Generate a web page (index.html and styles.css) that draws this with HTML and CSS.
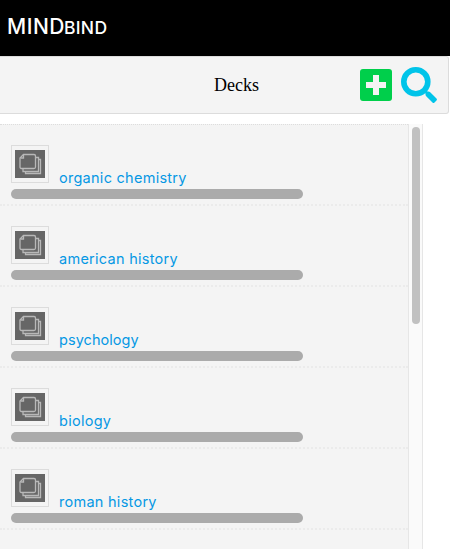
FILE: index.html
```html
<!DOCTYPE html>
<html lang="en">
<head>
<meta charset="utf-8">
<title>Mindbind</title>
<link rel="stylesheet" href="styles.css">
</head>
<body>
<svg width="0" height="0" class="defs">
  <symbol id="deck" viewBox="0 0 30 30">
    <rect y="1" width="30" height="28" fill="#666"/>
    <g fill="none" stroke="#b8b8b8" stroke-width="1.3">
      <path d="M8.500 5.500H19Q20.500 5.500 20.500 7V18Q20.500 19.500 19 19.500H6.500Q5 19.500 5 18V9Z"/>
      <path d="M5.500 9H8.500V5.500M20.500 8.500H23.500V22.500H8V19.500M23.500 10.500H25.500V24.500H10.500V22.500"/>
    </g>
  </symbol>
</svg>
<header class="brand"><span class="mind">MIND</span><span class="bind">BIND</span></header>
<div class="toolbar">
  <h1>Decks</h1>
  <div class="actions">
    <svg width="32" height="32" viewBox="0 0 32 32"><rect width="32" height="32" rx="3" fill="#00cf4b"/><path d="M16 6V26M6 16H26" stroke="#f4f4f4" stroke-width="6"/></svg>
    <svg width="37" height="37" viewBox="0 0 37 37"><circle cx="14.800" cy="14.800" r="12" fill="none" stroke="#00c4e9" stroke-width="5.600"/><path d="M22 24L24 22L26.500 24.500H27.500Q28.500 24.500 29.200 25.200L35.500 31.500Q36.500 32.500 35.500 33.500L33.500 35.500Q32.500 36.500 31.500 35.500L25.200 29.200Q24.500 28.500 24.500 27.500V26.500Z" fill="#00c4e9"/></svg>
  </div>
</div>
<main class="panel">
  <ul class="decks">
    <li><div class="info"><svg class="thumb"><use href="#deck"/></svg><a>organic chemistry</a></div><div class="bar"></div></li>
    <li><div class="info"><svg class="thumb"><use href="#deck"/></svg><a>american history</a></div><div class="bar"></div></li>
    <li><div class="info"><svg class="thumb"><use href="#deck"/></svg><a class="tight">psychology</a></div><div class="bar"></div></li>
    <li><div class="info"><svg class="thumb"><use href="#deck"/></svg><a>biology</a></div><div class="bar"></div></li>
    <li><div class="info"><svg class="thumb"><use href="#deck"/></svg><a>roman history</a></div><div class="bar"></div></li>
    <li></li>
  </ul>
  <div class="track"><div class="grip"></div></div>
</main>
</body>
</html>
```

FILE: styles.css
```css
* { box-sizing: border-box; }
body { margin: 0; background: #fff; overflow: hidden; }
.defs { display: block; }
.brand {
  height: 56px;
  padding: 15px 0 0 7px;
  background: #000;
  color: #fff;
  font-family: Inter, sans-serif;
  line-height: 24px;
  display: flex;
  align-items: baseline;
}
.mind { width: 57px; font-size: 21px; font-weight: 500; letter-spacing: .5px; }
.bind { font-size: 17.500px; font-weight: 500; letter-spacing: .3px; }
.toolbar {
  width: 449px;
  height: 58px;
  padding: 0 10px 0 214px;
  border: 1px solid #dcdcdc;
  border-left: 0;
  border-radius: 0 3px 3px 0;
  background: #f4f4f4;
  display: flex;
  align-items: center;
  justify-content: space-between;
}
h1 { margin: 0; font: 400 18px "Liberation Serif", serif; color: #000; }
.actions { display: flex; align-items: center; gap: 9px; }
.panel { display: flex; width: 423px; height: 425px; margin-top: 10px; overflow: hidden; }
.decks { list-style: none; margin: 0; padding: 0; width: 408px; background: #f4f4f4; border-top: 1px dotted #ddd; }
.decks li { height: 81px; padding: 20px 0 0 11px; border-bottom: 2px dotted #ebebeb; }
.info { display: flex; height: 38px; }
.thumb { width: 38px; height: 38px; padding: 3px; border: 1px solid #dcdcdc; }
.info a {
  margin: 23px 0 0 10px;
  font: 400 14.500px/20px Inter, sans-serif;
  letter-spacing: .27px;
  color: #0698e4;
  white-space: nowrap;
}
.info .tight { letter-spacing: .05px; }
.bar { width: 292px; height: 10px; margin-top: 6px; border-radius: 5px; background: #ababab; }
.track {
  width: 15px;
  padding: 3px 0 0 3px;
  background: #fafafa;
  border: solid #e6e6e6;
  border-width: 0 1px;
}
.grip { width: 8px; height: 197px; border-radius: 4px; background: #c1c1c1; }
```
